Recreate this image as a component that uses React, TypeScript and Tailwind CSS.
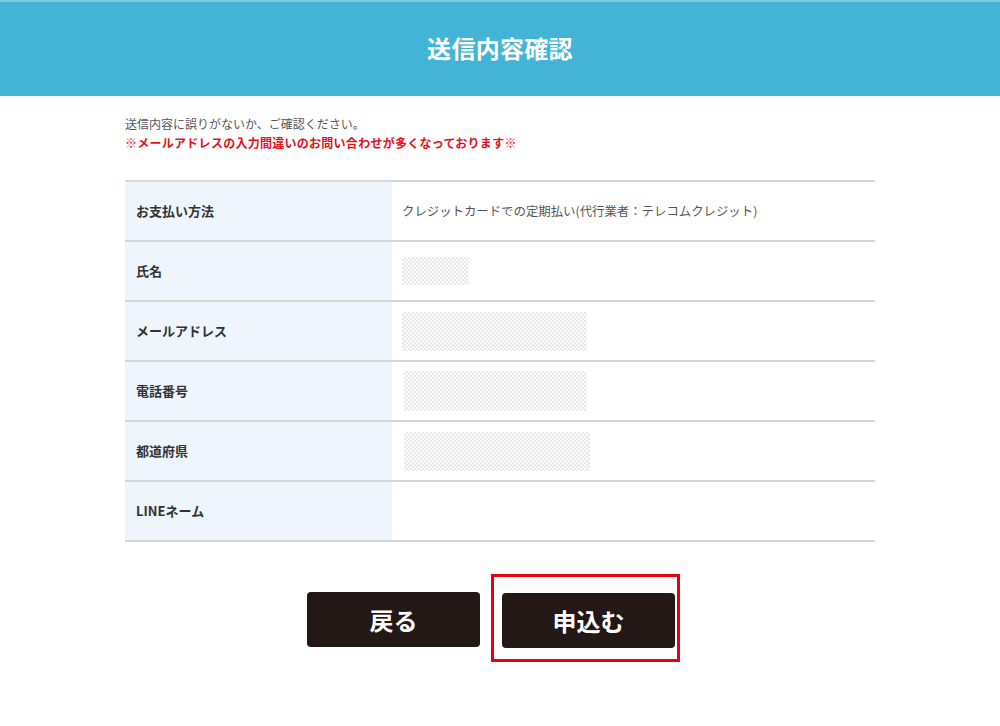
const rows: { label: string; value?: string; blur?: string }[] = [
  { label: 'お支払い方法', value: 'クレジットカードでの定期払い(代行業者：テレコムクレジット)' },
  { label: '氏名', blur: 'w-[67px] h-[28px]' },
  { label: 'メールアドレス', blur: 'w-[185px] h-[39px]' },
  { label: '電話番号', blur: 'w-[183px] h-[40px] ml-[2px]' },
  { label: '都道府県', blur: 'w-[186px] h-[39px] ml-[2px]' },
  { label: 'LINEネーム' },
];

// モザイク部分（個人情報のぼかし）
function Blurred({ size }: { size: string }) {
  return (
    <div
      className={`${size} bg-[repeating-conic-gradient(#e2e2e2_0%_25%,#fbfbfb_0%_50%)] bg-size-[4px_4px] opacity-80`}
    />
  );
}

export default function App() {
  return (
    <div className="min-h-[726px] bg-white font-['Noto_Sans_CJK_JP','Noto_Sans',sans-serif]">
      {/* ヘッダー */}
      <header className="h-[96px] bg-[#44b4d6] border-t-2 border-[#7ccbe3] flex items-center justify-center">
        <h1 className="text-white text-[24px] font-bold tracking-[0.3px] leading-none -mt-[3px]">送信内容確認</h1>
      </header>

      <main className="w-[750px] mx-auto">
        <div className="pt-[18px] text-[12px] leading-[19px]">
          <p className="text-[#555]">送信内容に誤りがないか、ご確認ください。</p>
          <p className="text-[#e60f1a] font-bold tracking-[0.27px]">※メールアドレスの入力間違いのお問い合わせが多くなっております※</p>
        </div>

        {/* 確認テーブル */}
        <div className="mt-[28px] border-t-2 border-[#d6d6d6]">
          {rows.map((r) => (
            <div key={r.label} className="flex h-[60px] border-b-2 border-[#d6d6d6]">
              <div className="w-[267px] bg-[#eef5fc] flex items-center pl-[11px] text-[13px] font-bold text-[#333]">
                {r.label}
              </div>
              <div className="flex-1 flex items-center pl-[10px] text-[12.4px] text-[#555]">
                {r.value}
                {r.blur && <Blurred size={r.blur} />}
              </div>
            </div>
          ))}
        </div>

        {/* ボタン */}
        <div className="mt-[32px] flex items-start justify-center pr-[13px]">
          <button className="mt-[18px] w-[173px] h-[55px] rounded-[4px] bg-[#231815] text-white text-[24px] font-bold">
            戻る
          </button>
          <div className="ml-[11px] border-[3px] border-[#e60012] pt-[16px] pb-[11px] pl-[8px] pr-[2px]">
            <button className="w-[173px] h-[55px] rounded-[4px] bg-[#231815] text-white text-[24px] font-bold">
              申込む
            </button>
          </div>
        </div>
      </main>
    </div>
  );
}
